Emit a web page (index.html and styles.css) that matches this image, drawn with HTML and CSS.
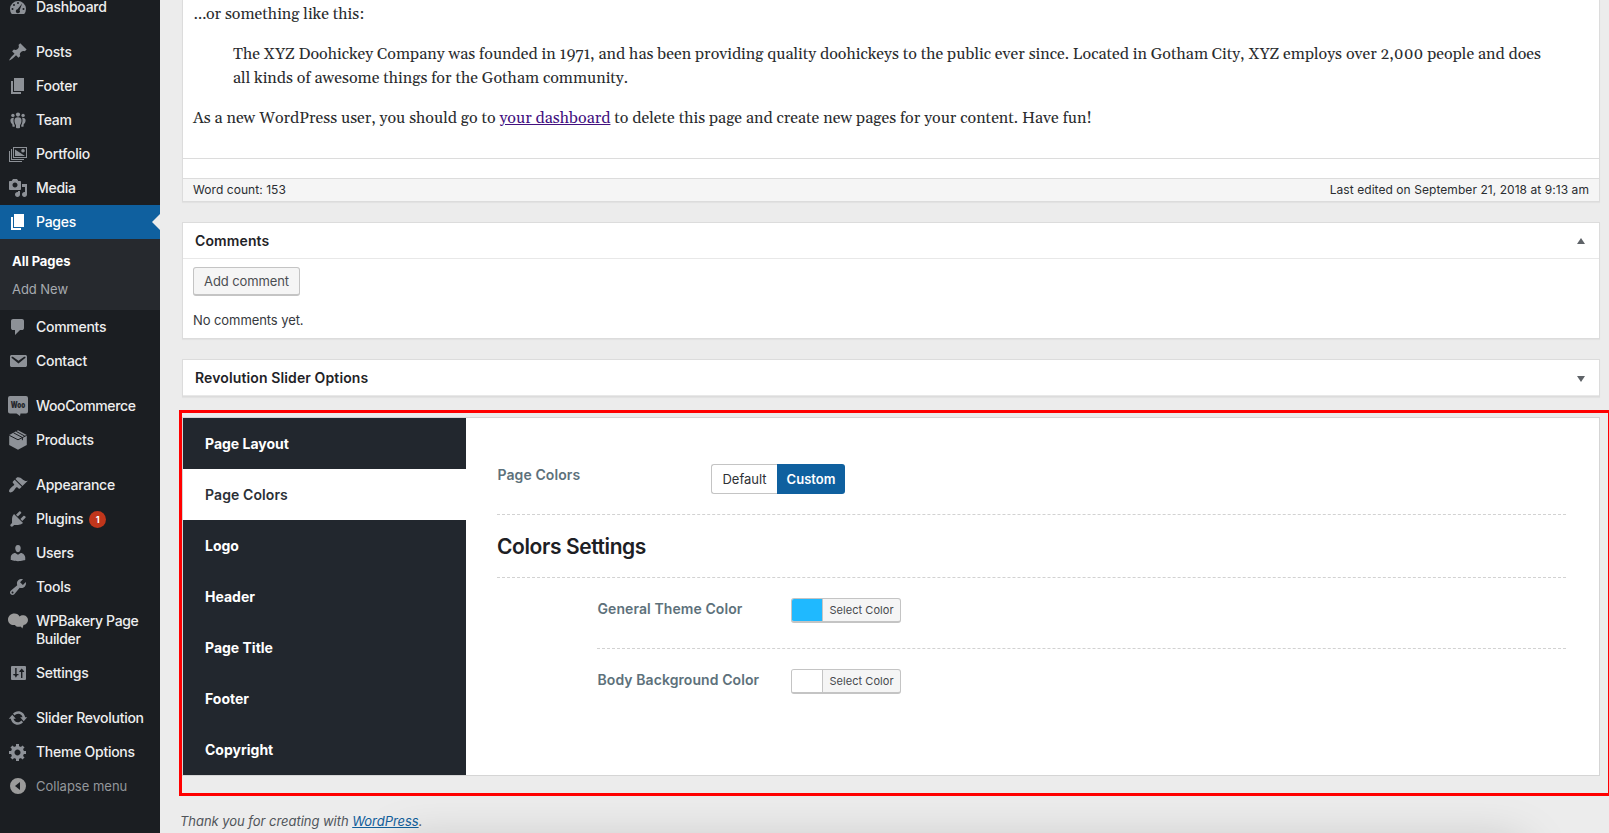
FILE: index.html
```html
<!DOCTYPE html>
<html lang="en">
<head>
<meta charset="utf-8">
<title>Edit Page</title>
<link rel="stylesheet" href="styles.css">
</head>
<body>
<div class="app">
<nav class="menu">
  <a class="item"><svg viewBox="0 0 20 20"><path fill-rule="evenodd" d="M3.76 17h12.48A8 8 0 1 0 3.76 17zM10 5a1 1 0 1 1 0 2 1 1 0 0 1 0-2zM6 7a1 1 0 1 1 0 2 1 1 0 0 1 0-2zm8.2-.4l-2.6 6.6a2 2 0 1 1-2.1-.9zM4.5 11a1 1 0 1 1 0 2 1 1 0 0 1 0-2zm11 0a1 1 0 1 1 0 2 1 1 0 0 1 0-2z"/></svg><span>Dashboard</span></a>
  <a class="item gap"><svg viewBox="0 0 20 20"><path d="M10.44 3.02l1.82-1.82 6.36 6.35-1.83 1.82c-1.05-.68-2.48-.57-3.41.36l-.75.75c-.92.93-1.04 2.35-.35 3.41l-1.83 1.82-2.41-2.41-2.8 2.79c-.42.42-3.38 2.71-3.8 2.29s1.86-3.39 2.28-3.81l2.79-2.79L4.1 9.36l1.83-1.82c1.05.69 2.48.57 3.4-.36l.75-.75c.93-.92 1.05-2.35.36-3.41z"/></svg><span>Posts</span></a>
  <a class="item"><svg viewBox="0 0 20 20"><path d="M6 15V2h10v13H6zm-1 1h8v2H3V5h2v11z"/></svg><span>Footer</span></a>
  <a class="item"><svg viewBox="0 0 20 20"><circle cx="10" cy="4.6" r="2.1"/><circle cx="4.9" cy="5.4" r="1.7"/><circle cx="15.1" cy="5.4" r="1.7"/><path d="M10 7.3c2.200 0 3.500 1.100 3.500 3.200 0 2-.8 3.500-1.500 4.700V17.700c-.8.7-3.200.7-4 0v-2.500c-.7-1.200-1.500-2.700-1.500-4.700 0-2.100 1.300-3.200 3.500-3.200zM5.900 7.800c-.8 2.500-.4 5.200.9 7.600v1.200c-.8.3-1.900.2-2.400-.2v-2c-1.200-1-2-2.400-2-3.900 0-1.900 1.400-3 3.500-2.700zm8.200 0c.8 2.500.4 5.200-.9 7.600v1.200c.8.3 1.900.2 2.400-.2v-2c1.200-1 2-2.400 2-3.900 0-1.900-1.400-3-3.500-2.700z"/></svg><span>Team</span></a>
  <a class="item"><svg viewBox="0 0 20 20"><path fill-rule="evenodd" d="M5 3h14v11H5zm1 1v9h12V4zM3 5h1v10h12v1H3zM1 7h1v10h12v1H1zM7 5.500l10 6.500H7zM15 5a1.800 1.800 0 1 1 0 3.600A1.800 1.800 0 0 1 15 5z"/></svg><span>Portfolio</span></a>
  <a class="item"><svg viewBox="0 0 20 20"><path d="M13 11V4c0-.55-.45-1-1-1h-1.670L9 1H5L3.670 3H2c-.55 0-1 .45-1 1v7c0 .55.45 1 1 1h10c.55 0 1-.45 1-1zM7 4.500c1.380 0 2.500 1.120 2.500 2.500S8.380 9.500 7 9.500 4.500 8.380 4.500 7 5.620 4.500 7 4.500zM14 6h5v10.500c0 1.380-1.120 2.500-2.500 2.500S14 17.880 14 16.500s1.120-2.500 2.500-2.500c.17 0 .34.02.5.05V9h-3V6zm-4 8.050V13h2v3.500c0 1.380-1.120 2.500-2.500 2.500S7 17.880 7 16.500 8.120 14 9.500 14c.17 0 .34.02.5.05z"/></svg><span>Media</span></a>
  <a class="item current"><svg viewBox="0 0 20 20"><path d="M6 15V2h10v13H6zm-1 1h8v2H3V5h2v11z"/></svg><span>Pages</span></a>
  <div class="submenu"><a class="on">All Pages</a><a>Add New</a></div>
  <a class="item"><svg viewBox="0 0 20 20"><path d="M5 2h9q.82 0 1.410.59T16 4v7q0 .82-.59 1.410T14 13h-2l-5 5v-5H5q-.82 0-1.410-.59T3 11V4q0-.82.59-1.410T5 2z"/></svg><span>Comments</span></a>
  <a class="item"><svg viewBox="0 0 20 20"><path d="M3.870 4h13.250C18.370 4 19 4.590 19 5.790v8.420c0 1.190-.63 1.790-1.880 1.790H3.870c-1.250 0-1.880-.6-1.880-1.790V5.790c0-1.200.63-1.790 1.880-1.790zm6.620 8.600l6.740-5.530c.24-.2.43-.66.13-1.070-.29-.41-.82-.42-1.170-.17l-5.700 3.860L4.800 5.830c-.35-.25-.88-.24-1.170.17-.3.410-.11.870.13 1.070z"/></svg><span>Contact</span></a>
  <a class="item gap"><svg viewBox="0 0 20 20"><path d="M2 0h16a2 2 0 0 1 2 2v13.500a2 2 0 0 1-2 2h-5.500L12 20l-3.500-2.500H2a2 2 0 0 1-2-2V2a2 2 0 0 1 2-2z"/><text x="10" y="12" text-anchor="middle" class="woo" textLength="14.500" lengthAdjust="spacingAndGlyphs">Woo</text></svg><span class="tight">WooCommerce</span></a>
  <a class="item"><svg viewBox="0 0 20 20"><path d="M10 .3L18.800 5v10L10 19.800 1.200 15V5z"/><path class="cut" d="M1.200 5.300L10 9.800l8.800-4.500M5.500 2.800l8.900 4.700v2.700M8.200 1.400l8.600 4.700"/></svg><span>Products</span></a>
  <a class="item gap"><svg viewBox="0 0 20 20"><path d="M14.480 11.060L7.410 3.990l1.500-1.500c.5-.56 2.300-.47 3.510.32 1.210.8 1.430 1.280 2.910 2.100 1.180.64 2.450 1.260 4.450.85zm-.71.71L6.700 4.700 4.930 6.470c-.39.39-.39 1.020 0 1.410l1.060 1.060c.39.39.39 1.030 0 1.420-.6.6-1.430 1.110-2.210 1.690-.35.26-.7.53-1.010.84C1.430 14.230.4 16.080 1.400 17.070c.99 1 2.840-.03 4.180-1.360.31-.31.58-.66.85-1.020.57-.78 1.080-1.610 1.690-2.210.39-.39 1.020-.39 1.410 0l1.060 1.060c.39.39 1.020.39 1.410 0z"/></svg><span>Appearance</span></a>
  <a class="item"><svg viewBox="0 0 20 20"><path d="M13.110 4.360L9.870 7.600 8 5.730l3.240-3.240c.35-.34 1.050-.2 1.560.32.52.51.66 1.210.31 1.550zm-8 1.770l.91-1.120 9.010 9.010-1.190.84c-.71.71-2.630 1.160-3.820 1.160H6.140L4.900 17.260c-.59.59-1.540.59-2.120 0-.59-.58-.59-1.530 0-2.120l1.240-1.240v-3.880c0-1.130.4-3.190 1.090-3.890zm7.260 3.970l3.240-3.240c.34-.35 1.040-.21 1.550.31.52.51.66 1.210.31 1.550l-3.240 3.250z"/></svg><span>Plugins</span><b class="badge">1</b></a>
  <a class="item"><svg viewBox="0 0 20 20"><path d="M10 9.250c-2.270 0-2.730-3.440-2.730-3.440C7 4.020 7.820 2 9.970 2c2.160 0 2.980 2.020 2.710 3.810 0 0-.41 3.440-2.680 3.440zm0 2.570L12.720 10c2.390 0 4.520 2.330 4.520 4.530v2.490s-3.650 1.130-7.240 1.130c-3.650 0-7.240-1.130-7.240-1.130v-2.490c0-2.250 1.940-4.480 4.470-4.480z"/></svg><span>Users</span></a>
  <a class="item"><svg viewBox="0 0 20 20"><path d="M16.680 9.770c-1.340 1.340-3.300 1.670-4.950.99l-5.410 6.520c-.99.99-2.590.99-3.580 0s-.99-2.590 0-3.570l6.520-5.420c-.68-1.650-.35-3.610.99-4.950 1.280-1.280 3.120-1.620 4.720-1.060l-2.890 2.890 2.820 2.820 2.860-2.870c.53 1.580.18 3.390-1.080 4.650zM3.810 16.210c.4.39 1.040.39 1.430 0 .4-.4.4-1.040 0-1.430-.39-.4-1.030-.4-1.430 0-.39.39-.39 1.030 0 1.430z"/></svg><span>Tools</span></a>
  <a class="item tall"><svg viewBox="0 0 20 20"><path class="soft" d="M6.500 2.600c2.500 0 4.200 1.200 5 3C12.700 4.500 14.200 4 15.800 4.300 18.300 4.700 20 6.700 20 9c0 2.700-1.800 4.600-4.500 5-.4 1.500-.7 2.500-1.300 3.500-.5-1-1-1.500-1.800-2-1.800.6-4.200.4-5.400-1.600C3 14.500 0 12 0 8.700c0-3.500 2.800-6.100 6.500-6.100z"/></svg><span class="tight">WPBakery Page Builder</span></a>
  <a class="item"><svg viewBox="0 0 20 20"><path fill-rule="evenodd" d="M4 3h13a1 1 0 0 1 1 1v12a1 1 0 0 1-1 1H4a1 1 0 0 1-1-1V4a1 1 0 0 1 1-1zm3.200 2v6H5.300v1.200h1.200L7.900 14.800l1.400-2.600h1.200V11H8.600V5zm6.500.5l-2.400 2.700v.8h1.700v6h1.400V9h1.700v-.8z"/></svg><span>Settings</span></a>
  <a class="item gap"><svg viewBox="0 0 20 20"><path d="M10.200 3.280c3.530 0 6.430 2.610 6.920 6h2.080l-3.500 4-3.500-4h2.320c-.45-1.970-2.210-3.450-4.320-3.450-1.450 0-2.730.71-3.540 1.780L4.950 5.660C6.230 4.200 8.110 3.280 10.200 3.280zm-.4 13.440c-3.520 0-6.430-2.610-6.920-6H.8l3.500-4c1.170 1.330 2.330 2.670 3.500 4H5.480c.45 1.970 2.210 3.450 4.320 3.450 1.450 0 2.730-.71 3.540-1.780l1.710 1.950c-1.280 1.460-3.150 2.380-5.250 2.380z"/></svg><span>Slider Revolution</span></a>
  <a class="item"><svg viewBox="0 0 20 20"><path d="M18 12h-2.180c-.17.7-.44 1.350-.81 1.930l1.540 1.540-2.100 2.100-1.540-1.540c-.58.36-1.230.63-1.910.79V19H8v-2.180c-.68-.16-1.330-.43-1.910-.79l-1.540 1.540-2.120-2.120 1.540-1.540c-.36-.58-.63-1.230-.79-1.910H1V9.030h2.170c.16-.7.44-1.350.8-1.940L2.430 5.550l2.100-2.100 1.540 1.540c.58-.37 1.240-.64 1.930-.81V2h3v2.180c.68.16 1.330.43 1.910.79l1.540-1.540 2.120 2.120-1.540 1.540c.36.59.64 1.240.8 1.940H18V12zm-8.500 1.500c1.660 0 3-1.340 3-3s-1.340-3-3-3-3 1.340-3 3 1.340 3 3 3z"/></svg><span>Theme Options</span></a>
  <a class="item collapse"><svg viewBox="0 0 20 20"><path fill-rule="evenodd" d="M10 2a8 8 0 1 1 0 16 8 8 0 0 1 0-16zm2 4L7 10l5 4z"/></svg><span>Collapse menu</span></a>
</nav>
<main class="main">
  <section class="editor">
    <div class="prose">
      <p>…or something like this:</p>
      <blockquote>The XYZ Doohickey Company was founded in 1971, and has been providing quality doohickeys to the public ever since. Located in Gotham City, XYZ employs over 2,000 people and does<br>all kinds of awesome things for the Gotham community.</blockquote>
      <p>As a new WordPress user, you should go to <a class="visited">your dashboard</a> to delete this page and create new pages for your content. Have fun!</p>
    </div>
    <div class="resize"></div>
    <div class="status"><span>Word count: 153</span><span>Last edited on September 21, 2018 at 9:13 am</span></div>
  </section>
  <section class="box comments">
    <header><h2>Comments</h2><svg class="arrow" viewBox="0 0 8 6"><path d="M0 6L4 0l4 6z"/></svg></header>
    <div class="body"><button class="btn">Add comment</button><p>No comments yet.</p></div>
  </section>
  <section class="box slider">
    <header><h2>Revolution Slider Options</h2><svg class="arrow down" viewBox="0 0 8 6"><path d="M0 0l4 6 4-6z"/></svg></header>
  </section>
  <div class="frame">
    <section class="panel">
      <div class="tabs"><a>Page Layout</a><a class="on">Page Colors</a><a>Logo</a><a>Header</a><a>Page Title</a><a>Footer</a><a>Copyright</a></div>
      <div class="fields">
        <div class="row first"><label>Page Colors</label><div class="toggle"><span>Default</span><span class="on">Custom</span></div></div>
        <h3>Colors Settings</h3>
        <div class="sub">
          <div class="row"><label>General Theme Color</label><div class="pick"><i class="blue"></i><span>Select Color</span></div></div>
          <div class="row last"><label>Body Background Color</label><div class="pick"><i></i><span>Select Color</span></div></div>
        </div>
      </div>
    </section>
  </div>
  <footer class="thanks">Thank you for creating with <a>WordPress</a>.</footer>
</main>
<div class="shade"></div>
</div>
</body>
</html>
```
FILE: styles.css
```css
* { box-sizing: border-box; }
html { overflow: hidden; height: 833px; }
body { margin: 0; height: 833px; overflow: hidden; background: #ececec; color: #36393d; font: 13px/18px Inter, "Liberation Sans", sans-serif; }
h2, h3, p, blockquote { margin: 0; }
.app { display: flex; height: 833px; overflow: hidden; position: relative; }

/* Admin menu */
.menu { width: 160px; flex: none; background: #1b1e22; margin-top: -10px; height: 843px; }
.item { display: flex; height: 34px; padding: 7px 0 0 8px; color: #eeeeef; font-size: 14px; line-height: 18px; font-weight: 500; letter-spacing: -.27px; position: relative; }
.item svg { width: 20px; height: 20px; flex: none; fill: #8d9197; margin-right: 8px; }
.item span { padding-top: 1px; }
.item .tight { letter-spacing: -.36px; }
.item.gap { margin-top: 11px; }
.item.tall { height: 52px; }
.item.current { background: #0f609f; color: #fff; }
.item.current svg { fill: #fff; }
.item.current::after { content: ""; position: absolute; right: 0; top: 9px; border: 8px solid transparent; border-left: 0; border-right-color: #ececec; }
.item.collapse { color: #93979b; font-weight: 400; font-size: 13px; letter-spacing: 0; }
.item.collapse svg, .item svg .soft { fill: #9b9b9b; }
.item svg .cut { fill: none; stroke: #1b1e22; stroke-width: 1; }
.item svg .woo { font: 900 8.5px Inter, sans-serif; fill: #24272b; letter-spacing: 0; }
.badge { width: 17px; height: 17px; border-radius: 50%; background: #c0361b; color: #fff; font-size: 9px; line-height: 17px; text-align: center; margin: 2px 0 0 6px; letter-spacing: 0; }
.submenu { height: 71px; padding: 8px 12px 7px; background: #26292e; display: flex; flex-direction: column; color: #a6abb0; }
.submenu a { height: 28px; line-height: 28px; letter-spacing: -.05px; }
.submenu .on { color: #fff; font-weight: 700; }

/* Content column */
.main { flex: 1; display: flex; flex-direction: column; padding-left: 22px; min-width: 0; }
.editor, .box { width: 1418px; border: 1px solid #dcdcdc; background: #fff; box-shadow: 0 1px 1px rgba(0,0,0,.04); flex: none; }
.editor { height: 202px; border-top: 0; }
.prose { height: 158px; padding: 2px 10px 0; font: 16px/24px Gelasio, "Liberation Serif", serif; font-variant-numeric: oldstyle-nums; color: #2a2c2e; white-space: nowrap; }
.prose blockquote { margin: 16px 40px; }
.visited { color: #43117f; text-decoration: underline; }
.resize { height: 21px; border: solid #dcdcdc; border-width: 1px 0; }
.status { height: 22px; background: #f5f5f5; display: flex; justify-content: space-between; padding: 0 10px; font-size: 12px; line-height: 22px; letter-spacing: .06px; color: #2a2d31; }
.box header { height: 36px; display: flex; align-items: center; justify-content: space-between; padding: 0 14px 0 12px; border-bottom: 1px solid #e8e8e8; }
.box h2 { font-size: 14px; line-height: 20px; font-weight: 600; padding-top: 1px; letter-spacing: .12px; color: #1f2327; }
.arrow { width: 8px; height: 6px; fill: #5f6368; margin-top: 1px; }
.arrow.down { margin-top: 3px; }
.comments { height: 117px; margin-top: 20px; }
.comments .body { padding: 8px 10px; }
.btn { display: block; width: 107px; height: 29px; padding: 0; border: 1px solid #c4c4c4; border-bottom-width: 2px; border-radius: 3px; background: #f5f5f5; color: #4b4e52; font: 13px/26px Inter, sans-serif; letter-spacing: -.1px; }
.comments p { margin-top: 15px; letter-spacing: -.08px; }
.slider { height: 38px; margin-top: 20px; }

/* Highlighted options panel */
.frame { flex: none; width: 1430px; height: 386px; margin: 13px 0 0 -3px; border: 3px solid #f00; border-right-width: 1px; padding-top: 4px; }
.panel { width: 1418px; height: 359px; border: 1px solid #d5d5d5; background: #fff; display: flex; }
.tabs { width: 283px; background: #22272e; color: #fff; font-weight: 700; font-size: 14px; }
.tabs a { display: block; height: 51px; line-height: 51px; padding-left: 22px; }
.tabs .on { background: #fff; color: #2b3036; font-weight: 600; letter-spacing: .1px; }
.fields { flex: 1; padding: 0 33px 0 31px; }
.row { display: flex; align-items: flex-start; border-bottom: 1px dashed #d2d2d2; }
.row label { font-size: 14px; line-height: 20px; font-weight: 600; letter-spacing: .08px; color: #5d717b; flex: none; padding: 1px 0 0 .5px; }
.row.first { height: 97px; padding-top: 46px; }
.row.first label { width: 214px; }
.toggle { display: flex; height: 30px; line-height: 30px; }
.toggle span { width: 66px; border: 1px solid #c4c4c4; border-right: 0; border-radius: 3px 0 0 3px; text-align: center; line-height: 29px; color: #2e3135; }
.toggle .on { width: 68px; border: 0; border-radius: 0 3px 3px 0; background: #0f609f; color: #fff; font-weight: 600; line-height: 31px; }
.fields h3 { height: 63px; border-bottom: 1px dashed #d2d2d2; font-size: 21px; line-height: 64px; font-weight: 600; letter-spacing: -.4px; color: #1d2024; }
.sub { padding-left: 100px; }
.sub .row { height: 71px; padding-top: 20px; }
.sub .row.last { border: 0; }
.sub label { width: 194px; }
.pick { width: 110px; height: 25px; display: flex; border: 1px solid #c4c4c4; border-bottom-width: 2px; border-radius: 3px; background: #f5f5f5; overflow: hidden; }
.pick i { width: 31px; border-right: 1px solid #c4c4c4; background: #fff; }
.pick .blue { background: #1fb9ff; }
.pick span { flex: 1; text-align: center; font-size: 11px; line-height: 23px; letter-spacing: .05px; color: #46494d; }

.thanks { margin: 15px 0 0 -2px; font-style: italic; line-height: 20px; letter-spacing: -.04px; color: #50555a; }
.thanks a { color: #12609b; text-decoration: underline; }

/* Soft shadow rising from the bottom edge */
.shade { position: absolute; left: 400px; top: 848px; width: 1120px; height: 40px; box-shadow: 0 0 50px 2px rgba(0,0,0,.22); }
```
